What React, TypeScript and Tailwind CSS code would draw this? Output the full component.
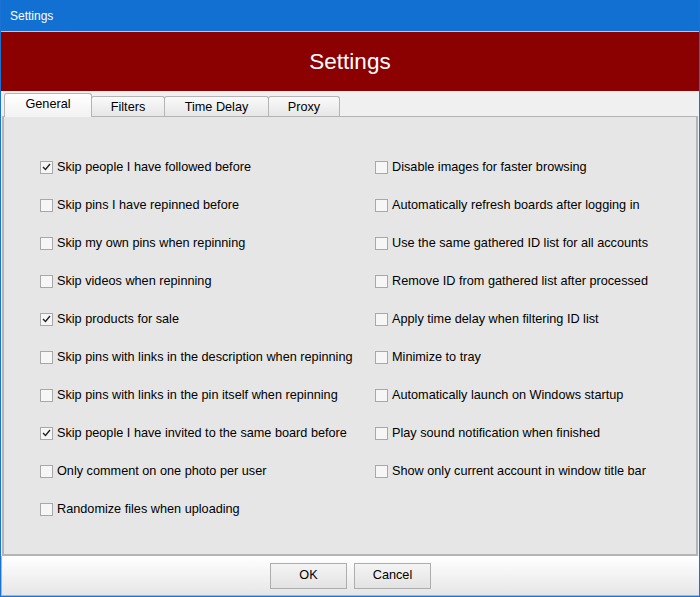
import React, { useState } from 'react';

const leftOptions = [
  { label: 'Skip people I have followed before', checked: true },
  { label: 'Skip pins I have repinned before', checked: false },
  { label: 'Skip my own pins when repinning', checked: false },
  { label: 'Skip videos when repinning', checked: false },
  { label: 'Skip products for sale', checked: true },
  { label: 'Skip pins with links in the description when repinning', checked: false },
  { label: 'Skip pins with links in the pin itself when repinning', checked: false },
  { label: 'Skip people I have invited to the same board before', checked: true },
  { label: 'Only comment on one photo per user', checked: false },
  { label: 'Randomize files when uploading', checked: false },
];

const rightOptions = [
  { label: 'Disable images for faster browsing', checked: false },
  { label: 'Automatically refresh boards after logging in', checked: false },
  { label: 'Use the same gathered ID list for all accounts', checked: false },
  { label: 'Remove ID from gathered list after processed', checked: false },
  { label: 'Apply time delay when filtering ID list', checked: false },
  { label: 'Minimize to tray', checked: false },
  { label: 'Automatically launch on Windows startup', checked: false },
  { label: 'Play sound notification when finished', checked: false },
  { label: 'Show only current account in window title bar', checked: false },
];

const tabs = ['General', 'Filters', 'Time Delay', 'Proxy'];
const tabWidths: Record<string, string> = {
  General: 'w-[88px]',
  Filters: 'w-[74px]',
  'Time Delay': 'w-[105px]',
  Proxy: 'w-[72px]',
};

const CheckRow: React.FC<{ label: string; initial: boolean }> = ({ label, initial }) => {
  const [checked, setChecked] = useState(initial);
  return (
    <div className="h-[38px] flex items-center gap-[4px] cursor-default" onClick={() => setChecked(!checked)}>
      <div className="w-[13px] h-[13px] border border-[#a8a8a8] bg-[#f6f6f6] flex items-center justify-center shrink-0">
        {checked && (
          <svg width="9" height="8" viewBox="0 0 9 8">
            <path d="M1 4 L3.5 6.5 L8 1" fill="none" stroke="#222" strokeWidth="1.4" />
          </svg>
        )}
      </div>
      <span className="text-[12.7px] text-black leading-none whitespace-nowrap">{label}</span>
    </div>
  );
};

export default function App() {
  const [active, setActive] = useState('General');

  return (
    <div
      className="w-[700px] h-[597px] flex flex-col bg-[#f0f0f0] border-x border-b border-[#1a73d4] overflow-hidden"
      style={{ fontFamily: '"Liberation Sans", Arial, sans-serif' }}
    >
      {/* Title bar */}
      <div className="h-[31px] -mx-px bg-[#1370d3] flex items-center pl-[10px] shrink-0">
        <span className="text-white text-[12px]">Settings</span>
      </div>

      {/* Header */}
      <div className="h-[60px] border-t border-[#c8c8c8] bg-[#8b0000] flex items-center justify-center shrink-0">
        <span className="text-white text-[22.5px]">Settings</span>
      </div>

      {/* Tabs */}
      <div className="h-[25px] flex items-end pl-[3px] shrink-0 relative z-10">
        {tabs.map((t, i) => {
          const sel = t === active;
          return (
            <div
              key={t}
              onClick={() => setActive(t)}
              className={`${tabWidths[t]} ${i > 0 ? '-ml-px' : ''} ${
                sel
                  ? 'h-[24px] -mb-px relative z-10 border border-b-0 border-[#b4b4b4] bg-gradient-to-b from-white to-[#f2f2f2] pt-[4px]'
                  : 'h-[20px] border border-[#b4b4b4] border-b-0 bg-gradient-to-b from-[#fafafa] to-[#e6e6e6] mb-0 pt-[4px]'
              } rounded-t-[3px] text-center text-[12.7px] text-black leading-none cursor-default`}
            >
              {t}
            </div>
          );
        })}
      </div>

      {/* Tab page */}
      <div className="h-[440px] mx-px border-2 border-t border-[#b4b4b4] bg-[#e6e6e6] shrink-0 pt-[31px] pl-[36px] flex">
        <div className="w-[335px] flex flex-col">
          {leftOptions.map((o) => (
            <CheckRow key={o.label} label={o.label} initial={o.checked} />
          ))}
        </div>
        <div className="flex flex-col">
          {rightOptions.map((o) => (
            <CheckRow key={o.label} label={o.label} initial={o.checked} />
          ))}
        </div>
      </div>

      {/* Bottom bar */}
      <div className="flex-1 border-l border-b border-[#b4b4b4] bg-gradient-to-b from-white to-[#e6e6e6] flex items-start justify-center gap-[7px] pt-[7px]">
        <button className="w-[77px] h-[26px] border border-[#adadad] bg-gradient-to-b from-[#f4f4f4] to-[#e3e3e3] text-[12.7px] text-black">
          OK
        </button>
        <button className="w-[77px] h-[26px] border border-[#adadad] bg-gradient-to-b from-[#f4f4f4] to-[#e3e3e3] text-[12.7px] text-black">
          Cancel
        </button>
      </div>
    </div>
  );
}
